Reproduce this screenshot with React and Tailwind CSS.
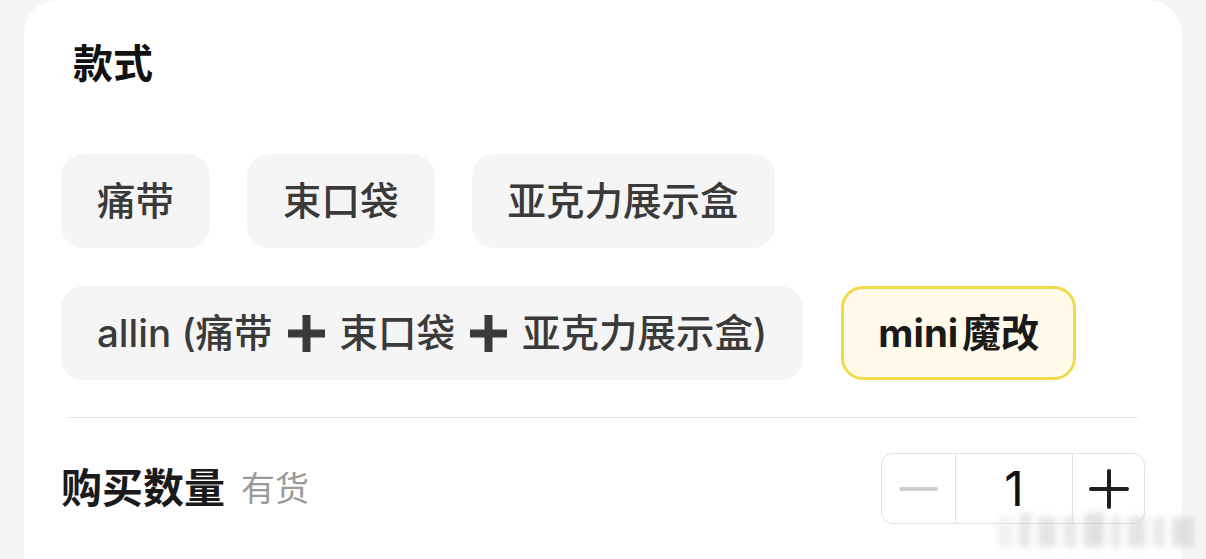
import React, { useState } from 'react';

const font = "font-['Inter','Noto_Sans_CJK_SC',sans-serif]";

// 规格选项
const Chip = ({ children, active = false }) => (
  <div
    className={
      active
        ? 'h-[94px] flex items-center px-[34px] rounded-[22px] bg-[#fffaea] border-[3px] border-[#f0da4b] text-[#1a1a1a] font-bold'
        : 'h-[94px] flex items-center px-[36px] rounded-[22px] bg-[#f5f5f5] text-[#3a3a3a] font-medium'
    }
  >
    <span className="text-[38.5px] leading-none whitespace-nowrap flex items-center">{children}</span>
  </div>
);

const HeavyPlus = () => (
  <svg width="37" height="37" viewBox="0 0 37 37" className="mx-[15px] shrink-0">
    <rect x="14.5" y="0" width="8" height="37" fill="#3a3a3a" />
    <rect x="0" y="14.5" width="37" height="8" fill="#3a3a3a" />
  </svg>
);

const Stepper = () => {
  const [count, setCount] = useState(1);
  return (
    <div className="flex h-[71px] border border-[#e0e0e0] rounded-[12px] overflow-hidden">
      <button
        className="w-[73px] flex items-center justify-center"
        onClick={() => setCount((c) => Math.max(1, c - 1))}
      >
        <span className="block w-[39px] h-[4px] rounded-full bg-[#cfcfcf]" />
      </button>
      <div className="w-[118px] flex items-center justify-center border-x border-[#e0e0e0] text-[48px] leading-none text-[#111]">
        {count}
      </div>
      <button className="w-[71px] flex items-center justify-center" onClick={() => setCount((c) => c + 1)}>
        <svg width="40" height="40" viewBox="0 0 40 40">
          <rect x="18" y="0" width="4" height="40" rx="2" fill="#1f1f1f" />
          <rect x="0" y="18" width="40" height="4" rx="2" fill="#1f1f1f" />
        </svg>
      </button>
    </div>
  );
};

export default function App() {
  return (
    <div className={`relative h-[559px] bg-[#f5f5f5] px-[24px] overflow-hidden ${font}`}>
      <div className="h-full bg-white rounded-t-[34px] px-[37px]">
        <h2 className="pt-[44px] pl-[12px] text-[40px] leading-[40px] font-bold text-[#111]">款式</h2>

        <div className="mt-[70px] flex flex-col gap-[38px]">
          <div className="flex gap-[37px]">
            <Chip>痛带</Chip>
            <Chip>束口袋</Chip>
            <Chip>亚克力展示盒</Chip>
          </div>
          <div className="flex gap-[38px]">
            <Chip>
              allin (痛带
              <HeavyPlus />
              束口袋
              <HeavyPlus />
              亚克力展示盒)
            </Chip>
            <Chip active>
              mini<span className="ml-[4px]">魔改</span>
            </Chip>
          </div>
        </div>

        <div className="mt-[37px] mx-[7px] h-px bg-[#e8e8e8]" />

        <div className="mt-[35px] flex items-center justify-between">
          <div className="flex items-center">
            <span className="text-[41px] leading-none font-bold text-[#1a1a1a]">购买数量</span>
            <span className="ml-[16px] text-[34px] leading-none text-[#9a9a9a]">有货</span>
          </div>
          <Stepper />
        </div>
      </div>

      {/* 水印 */}
      <div className="absolute right-[12px] bottom-[12px] flex items-end gap-[7px] blur-[3px] opacity-60">
        <span className="w-[14px] h-[30px] bg-[#e8e8e8]" />
        <span className="w-[12px] h-[34px] bg-[#d6d6d6]" />
        <span className="w-[18px] h-[30px] bg-[#d2d2d2]" />
        <span className="w-[14px] h-[30px] bg-[#dadada]" />
        <span className="w-[20px] h-[34px] bg-[#cecece]" />
        <span className="w-[10px] h-[30px] bg-[#d8d8d8]" />
        <span className="w-[18px] h-[30px] bg-[#d2d2d2]" />
        <span className="w-[12px] h-[30px] bg-[#dadada]" />
        <span className="w-[22px] h-[30px] bg-[#d0d0d0]" />
      </div>
    </div>
  );
}
